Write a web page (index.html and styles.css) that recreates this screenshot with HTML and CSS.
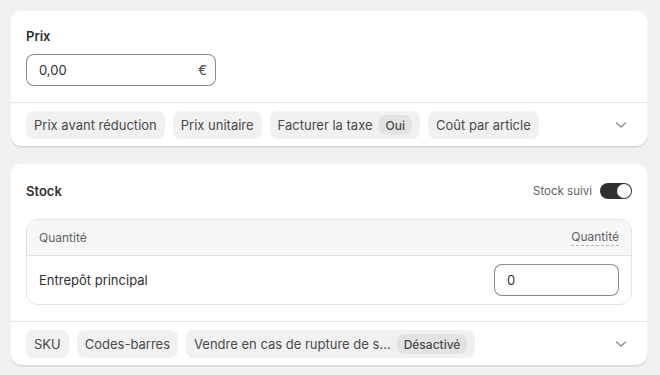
FILE: index.html
```html
<!DOCTYPE html>
<html lang="fr">
<head>
    <meta charset="UTF-8">
    <meta name="viewport" content="width=device-width, initial-scale=1.0">
    <title>Produit</title>
    <link rel="stylesheet" href="styles.css">
</head>
<body>
    <div class="page">
        <div class="card">
            <div class="section">
                <div class="label">Prix</div>
                <div class="field price">
                    <span>0,00</span>
                    <span class="suffix">€</span>
                </div>
            </div>
            <div class="pills-row">
                <div class="pills">
                    <span class="pill">Prix avant réduction</span>
                    <span class="pill">Prix unitaire</span>
                    <span class="pill">Facturer la taxe <span class="badge">Oui</span></span>
                    <span class="pill">Coût par article</span>
                </div>
                <svg class="chevron" width="20" height="20" viewBox="0 0 20 20"><path d="M5.5 8l4.5 4 4.5-4" fill="none" stroke="#8a8a8a" stroke-width="1.4" stroke-linecap="round" stroke-linejoin="round"/></svg>
            </div>
        </div>

        <div class="card">
            <div class="section">
                <div class="head">
                    <div class="label">Stock</div>
                    <div class="tracked">
                        <span>Stock suivi</span>
                        <span class="toggle"><span class="knob"></span></span>
                    </div>
                </div>
                <div class="table">
                    <div class="table-head">
                        <span>Quantité</span>
                        <span class="dotted">Quantité</span>
                    </div>
                    <div class="table-row">
                        <span>Entrepôt principal</span>
                        <div class="field qty">0</div>
                    </div>
                </div>
            </div>
            <div class="pills-row">
                <div class="pills">
                    <span class="pill">SKU</span>
                    <span class="pill">Codes-barres</span>
                    <span class="pill">Vendre en cas de rupture de s... <span class="badge">Désactivé</span></span>
                </div>
                <svg class="chevron" width="20" height="20" viewBox="0 0 20 20"><path d="M5.5 8l4.5 4 4.5-4" fill="none" stroke="#8a8a8a" stroke-width="1.4" stroke-linecap="round" stroke-linejoin="round"/></svg>
            </div>
        </div>
    </div>
</body>
</html>
```

FILE: styles.css
```css
*{
    margin: 0;
    padding: 0;
    box-sizing: border-box;
}
body{
    background: #f1f1f1;
    font-family: Inter, 'Noto Sans', sans-serif;
    font-size: 13px;
    color: #303030;
}
.page{
    padding: 10px 12px 10px 10px;
    display: flex;
    flex-direction: column;
    gap: 16px;
}
.card{
    background: #fff;
    border-radius: 12px;
    box-shadow: 0 1px 0 rgba(26,26,26,0.07), inset 0 -1px 0 #d4d4d4, inset 0 0 0 1px rgba(0,0,0,0.04);
}
.section{
    padding: 16px;
    border-bottom: 1px solid #e3e3e3;
}
.label{
    font-weight: 600;
    line-height: 20px;
}
.field{
    height: 32px;
    border: 1px solid #8a8a8a;
    border-top-color: #898f94;
    border-radius: 8px;
    display: flex;
    align-items: center;
    padding: 0 12px;
}
.price{
    width: 190px;
    margin-top: 8px;
    justify-content: space-between;
    padding-right: 8px;
}
.suffix{
    color: #4a4a4a;
}
.pills-row{
    display: flex;
    align-items: center;
    justify-content: space-between;
    padding: 8px 17px 8px 16px;
}
.pills{
    display: flex;
    gap: 8px;
}
.pill{
    height: 28px;
    padding: 0 8px;
    background: #f1f1f1;
    border-radius: 8px;
    display: flex;
    align-items: center;
    gap: 6px;
    color: #4a4a4a;
}
.badge{
    height: 20px;
    padding: 0 7px;
    background: #e3e3e3;
    border-radius: 8px;
    font-size: 12px;
    font-weight: 450;
    display: flex;
    align-items: center;
    color: #4a4a4a;
}
.chevron{
    display: block;
}
.head{
    display: flex;
    align-items: center;
    justify-content: space-between;
    height: 24px;
    margin-bottom: 16px;
}
.tracked{
    display: flex;
    align-items: center;
    gap: 8px;
    font-size: 11.5px;
    color: #616161;
}
.toggle{
    width: 32px;
    height: 16px;
    background: #303030;
    border-radius: 8px;
    display: flex;
    justify-content: flex-end;
    padding: 1px;
}
.knob{
    width: 14px;
    height: 14px;
    border-radius: 50%;
    background: #fff;
}
.table{
    border: 1px solid #e3e3e3;
    border-radius: 12px;
    overflow: hidden;
}
.table-head{
    height: 36px;
    background: #f7f7f7;
    border-bottom: 1px solid #e3e3e3;
    display: flex;
    align-items: center;
    justify-content: space-between;
    padding: 0 12px;
    font-size: 12px;
    color: #616161;
}
.dotted{
    border-bottom: 1px dashed #b5b5b5;
    line-height: 16px;
}
.table-row{
    display: flex;
    align-items: center;
    justify-content: space-between;
    padding: 8px 12px;
}
.qty{
    width: 125px;
}
```
